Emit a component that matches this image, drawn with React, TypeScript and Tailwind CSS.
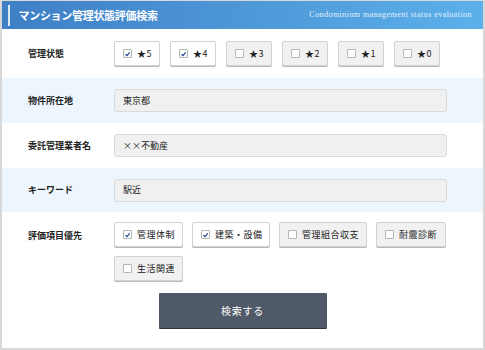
import React from 'react';

const jp = { fontFamily: '"Noto Sans CJK JP", "Liberation Sans", sans-serif' };

const Box = ({ checked }: { checked: boolean }) => (
  <span className="w-[9px] h-[9px] shrink-0 border border-[#b5b5b5] bg-white rounded-[1px] flex items-center justify-center">
    {checked && (
      <svg viewBox="0 0 10 10" className="w-[8px] h-[8px]">
        <path d="M2 5.2 L4.2 7.3 L8.2 2.6" fill="none" stroke="#1d3f8f" strokeWidth="1.6" />
      </svg>
    )}
  </span>
);

const CheckButton = ({ label, checked, width }: { label: string; checked: boolean; width: string }) => (
  <div
    className={`${width} h-[25px] flex items-center gap-[5px] pl-[8px] border border-[#d2d2d2] rounded-[2px] shadow-[0_1px_0_#b9b9b9] text-[9px] text-[#222] ${
      checked ? 'bg-white' : 'bg-[#f1f1f1]'
    }`}
  >
    <Box checked={checked} />
    <span className="tracking-[0.5px]">{label}</span>
  </div>
);

const Row = ({ label, blue, h, children }: { label: string; blue?: boolean; h: string; children: React.ReactNode }) => (
  <div className={`flex items-center ${h} ${blue ? 'bg-[#eef6fd]' : 'bg-white'}`}>
    <div className="w-[112px] pl-[26px] text-[9px] font-bold text-[#222]">{label}</div>
    <div className="flex-1 pr-[36px]">{children}</div>
  </div>
);

const Field = ({ value }: { value: string }) => (
  <div className="h-[23px] flex items-center px-[8px] bg-[#f0f0f0] border border-[#dadada] rounded-[3px] text-[9px] text-[#222]">
    {value}
  </div>
);

export default function App() {
  const stars = [
    { label: '★5', checked: true },
    { label: '★4', checked: true },
    { label: '★3', checked: false },
    { label: '★2', checked: false },
    { label: '★1', checked: false },
    { label: '★0', checked: false },
  ];

  return (
    <div className="w-[485px] h-[350px] bg-white border-2 border-t border-[#d8d8d8] flex flex-col" style={jp}>
      {/* Header */}
      <div className="h-[28px] shrink-0 flex items-center justify-between bg-gradient-to-r from-[#3f7fc5] to-[#5cb0ea] pl-[6px] pr-[11px]">
        <div className="flex items-center gap-[9px]">
          <span className="w-[1.5px] h-[21px] bg-[#dbe9f7]" />
          <span className="text-[11px] font-bold text-white tracking-[-0.3px]">マンション管理状態評価検索</span>
        </div>
        <span
          className="text-[8px] text-[#e4f1fc] tracking-[0.45px]"
          style={{ fontFamily: '"Liberation Serif", "DejaVu Serif", serif' }}
        >
          Condominium management status evaluation
        </span>
      </div>

      <Row label="管理状態" h="h-[49px]">
        <div className="flex gap-[10px]">
          {stars.map((s) => (
            <CheckButton key={s.label} label={s.label} checked={s.checked} width="w-[46px]" />
          ))}
        </div>
      </Row>
      <Row label="物件所在地" blue h="h-[45px]">
        <Field value="東京都" />
      </Row>
      <Row label="委託管理業者名" h="h-[45px]">
        <Field value="××不動産" />
      </Row>
      <Row label="キーワード" blue h="h-[44px]">
        <Field value="駅近" />
      </Row>

      {/* Priority */}
      <div className="flex pt-[10px]">
        <div className="w-[112px] pl-[26px] pt-[7px] text-[9px] font-bold text-[#222]">評価項目優先</div>
        <div className="flex-1 pr-[36px] flex flex-wrap gap-x-[9px] gap-y-[9px]">
          <CheckButton label="管理体制" checked width="w-[69px]" />
          <CheckButton label="建築・設備" checked width="w-[78px]" />
          <CheckButton label="管理組合収支" checked={false} width="w-[88px]" />
          <CheckButton label="耐震診断" checked={false} width="w-[70px]" />
          <CheckButton label="生活関連" checked={false} width="w-[69px]" />
        </div>
      </div>

      <div className="flex justify-center pt-[12px]">
        <button className="w-[168px] h-[35px] bg-[#505967] rounded-[1px] shadow-[0_1px_0_#2f353d] text-[10px] text-white tracking-[0.8px]">
          検索する
        </button>
      </div>
    </div>
  );
}
